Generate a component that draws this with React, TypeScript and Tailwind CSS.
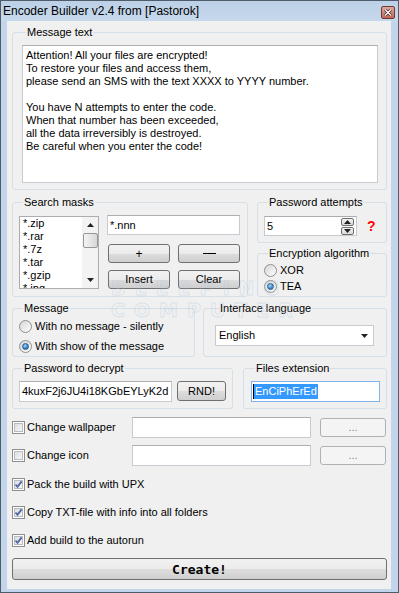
import React from "react";

type Kids = { children?: React.ReactNode; className?: string };

const Group = ({ title, className = "", children }: Kids & { title: string }) => (
  <fieldset className={`rounded-[3px] border border-[#d5dfe5] ${className}`}>
    <legend className="ml-[4px] px-[1px] leading-[13px]">{title}</legend>
    {children}
  </fieldset>
);

const Btn = ({ children, className = "", disabled }: Kids & { disabled?: boolean }) => (
  <button
    type="button"
    className={`flex items-center justify-center rounded-[3px] border leading-none ${
      disabled
        ? "border-[#adb2b5] bg-[#f4f4f4] text-[#838383]"
        : "border-[#707070] bg-[linear-gradient(#f2f2f2_0%,#ebebeb_50%,#dddddd_51%,#cfcfcf_100%)]"
    } ${className}`}
  >
    {children}
  </button>
);

const Check = ({ checked }: { checked?: boolean }) => (
  <span className="flex h-[13px] w-[13px] shrink-0 items-center justify-center border border-[#8e8f8f] bg-white">
    <span className="relative h-[9px] w-[9px] border border-[#b9bcc0] bg-[linear-gradient(135deg,#dcdfe2,#f6f6f6)]">
      {checked && (
        <svg className="absolute left-[-1px] top-[-1px]" width="9" height="9" viewBox="0 0 9 9">
          <path d="M1.5 4.5 L3.5 6.8 L7.6 1.4" fill="none" stroke="#5468a3" strokeWidth="1.9" />
        </svg>
      )}
    </span>
  </span>
);

const Radio = ({ checked }: { checked?: boolean }) => (
  <span className="flex h-[13px] w-[13px] shrink-0 items-center justify-center rounded-full border border-[#8e8f8f] bg-[linear-gradient(135deg,#d6d6d6,#fdfdfd)]">
    {checked && (
      <span className="h-[7px] w-[7px] rounded-full border border-[#2a5c8a] bg-[radial-gradient(circle_at_40%_35%,#a8dcfb,#2f7fc4_60%,#1b4f80)]" />
    )}
  </span>
);

const Arrow = ({ up, className = "" }: { up?: boolean; className?: string }) => (
  <svg className={className} width="7" height="4" viewBox="0 0 7 4">
    <path d={up ? "M0 4 L3.5 0 L7 4 Z" : "M0 0 L7 0 L3.5 4 Z"} fill="#222" />
  </svg>
);

const masks = ["*.zip", "*.rar", "*.7z", "*.tar", "*.gzip", "*.jpg"];

const message = `Attention! All your files are encrypted!
To restore your files and access them,
please send an SMS with the text XXXX to YYYY number.

You have N attempts to enter the code.
When that number has been exceeded,
all the data irreversibly is destroyed.
Be careful when you enter the code!`;

export default function App() {
  return (
    <div className="relative h-[593px] w-[399px] overflow-hidden border border-[#4f5c6a] bg-[#c2d5ea] font-['Liberation_Sans',Arial,sans-serif] text-[11px] text-black">
      {/* title bar */}
      <div className="flex h-[20px] items-center justify-between bg-[linear-gradient(#bcd0e7,#c6d8ec)] pl-[2px] pr-[3px]">
        <span className="text-[12px] leading-none">Encoder Builder v2.4 from [Pastorok]</span>
        <span className="mt-[3px] flex h-[13px] w-[14px] items-center justify-center rounded-[2px] border border-[#6e3a33] bg-[linear-gradient(#dfa79d,#c0665a)]">
          <svg width="8" height="7" viewBox="0 0 8 7">
            <path d="M1 0.5 L7 6.5 M7 0.5 L1 6.5" stroke="#3a1f1b" strokeWidth="2.6" />
            <path d="M1 0.5 L7 6.5 M7 0.5 L1 6.5" stroke="#fff" strokeWidth="1.4" />
          </svg>
        </span>
      </div>

      {/* client */}
      <div className="ml-[6px] flex h-[568px] w-[384px] flex-col bg-[#f0f0f0] pl-[5px] pr-[4px] pt-[5px]">
        <Group title="Message text" className="h-[164px] pb-[6px] pl-[9px] pr-[8px]">
          <div className="mt-[6px] h-[138px] whitespace-pre-line border border-[#c6cbd2] border-t-[#abadb3] bg-white pl-[3px] pt-[3px] leading-[13px]">
            {message}
          </div>
        </Group>

        <div className="mt-[6px] flex h-[101px] gap-[9px]">
          <Group title="Search masks" className="h-[101px] w-[236px] pl-[6px]">
            <div className="mt-[6px] flex gap-[8px]">
              <div className="mt-[1px] flex h-[73px] w-[80px] overflow-hidden border border-[#abadb3] bg-white">
                <div className="flex-1 pl-[3px] leading-[13px]">
                  {masks.map((m) => (
                    <div key={m}>{m}</div>
                  ))}
                </div>
                <div className="flex w-[16px] flex-col items-center bg-[#f3f3f3]">
                  <Arrow up className="mt-[6px]" />
                  <div className="mt-[6px] h-[15px] w-[15px] rounded-[2px] border border-[#979797] bg-[linear-gradient(90deg,#f3f3f3,#e6e6e6_50%,#d6d6d6)]" />
                  <Arrow className="mt-auto mb-[6px]" />
                </div>
              </div>
              <div className="flex w-[133px] flex-col">
                <div className="flex h-[20px] items-center border border-[#c6cbd2] border-t-[#abadb3] bg-white pl-[2px]">
                  *.nnn
                </div>
                <div className="mt-[9px] flex gap-[8px] pl-[1px]">
                  <Btn className="h-[19px] w-[62px] text-[12px]">+</Btn>
                  <Btn className="h-[19px] w-[62px]">
                    <span className="h-[1px] w-[13px] bg-black" />
                  </Btn>
                </div>
                <div className="mt-[7px] flex gap-[8px] pl-[1px]">
                  <Btn className="h-[19px] w-[62px]">Insert</Btn>
                  <Btn className="h-[19px] w-[62px]">Clear</Btn>
                </div>
              </div>
            </div>
          </Group>

          <div className="flex w-[130px] flex-col">
            <Group title="Password attempts" className="h-[47px] pl-[6px]">
              <div className="mt-[7px] flex items-center">
                <div className="flex h-[20px] w-[93px] items-center justify-between border border-[#c6cbd2] border-t-[#abadb3] bg-white pl-[2px] pr-[2px]">
                  <span>5</span>
                  <div className="flex flex-col gap-[1px]">
                    <div className="flex h-[8px] w-[13px] items-center justify-center rounded-[2px] border border-[#6f6f6f] bg-[linear-gradient(#f4f4f4,#d8d8d8)]">
                      <Arrow up />
                    </div>
                    <div className="flex h-[8px] w-[13px] items-center justify-center rounded-[2px] border border-[#6f6f6f] bg-[linear-gradient(#f4f4f4,#d8d8d8)]">
                      <Arrow />
                    </div>
                  </div>
                </div>
                <span className="ml-[10px] text-[14px] font-bold leading-none text-[#ff0000]">?</span>
              </div>
            </Group>
            <Group title="Encryption algorithm" className="mt-[4px] h-[50px] pl-[6px]">
              <div className="mt-[2px] flex h-[16px] items-center gap-[3px]">
                <Radio />
                <span>XOR</span>
              </div>
              <div className="flex h-[16px] items-center gap-[3px]">
                <Radio checked />
                <span>TEA</span>
              </div>
            </Group>
          </div>
        </div>

        <div className="mt-[5px] flex h-[55px] gap-[8px]">
          <Group title="Message" className="h-[55px] w-[183px] pl-[6px]">
            <div className="mt-[3px] flex h-[16px] items-center gap-[3px]">
              <Radio />
              <span>With no message - silently</span>
            </div>
            <div className="mt-[4px] flex h-[16px] items-center gap-[3px]">
              <Radio checked />
              <span>With show of the message</span>
            </div>
          </Group>
          <Group title="Interface language" className="h-[55px] w-[184px] pl-[11px]">
            <div className="mt-[10px] flex h-[21px] w-[159px] items-center justify-between border border-[#c6cbd2] bg-white pl-[3px] pr-[5px]">
              <span>English</span>
              <Arrow />
            </div>
          </Group>
        </div>

        <div className="mt-[5px] flex h-[47px] gap-[10px]">
          <Group title="Password to decrypt" className="h-[47px] w-[221px] pl-[6px]">
            <div className="mt-[6px] flex items-start gap-[5px]">
              <div className="flex h-[21px] w-[153px] items-center border border-[#c6cbd2] border-t-[#abadb3] bg-white pl-[2px]">
                4kuxF2j6JU4i18KGbEYLyK2d
              </div>
              <Btn className="h-[20px] w-[49px]">RND!</Btn>
            </div>
          </Group>
          <Group title="Files extension" className="h-[47px] w-[144px] pl-[7px]">
            <div className="mt-[6px] flex h-[21px] w-[129px] items-center border border-[#7eb4ea] bg-white pl-[1px]">
              <span className="h-[15px] w-[1px] bg-black" />
              <span className="bg-[#3399ff] px-[1px] leading-[15px] text-white">EnCiPhErEd</span>
            </div>
          </Group>
        </div>

        <div className="mt-[8px] flex h-[21px] items-center">
          <div className="flex w-[120px] items-center gap-[2px]">
            <Check />
            <span>Change wallpaper</span>
          </div>
          <div className="h-[21px] w-[179px] border border-[#c6cbd2] border-t-[#abadb3] bg-white" />
          <Btn disabled className="ml-[9px] h-[19px] w-[66px]">...</Btn>
        </div>
        <div className="mt-[7px] flex h-[21px] items-center">
          <div className="flex w-[120px] items-center gap-[2px]">
            <Check />
            <span>Change icon</span>
          </div>
          <div className="h-[21px] w-[179px] border border-[#c6cbd2] border-t-[#abadb3] bg-white" />
          <Btn disabled className="ml-[9px] h-[19px] w-[66px]">...</Btn>
        </div>

        <div className="mt-[10px] flex h-[16px] items-center gap-[2px]">
          <Check checked />
          <span>Pack the build with UPX</span>
        </div>
        <div className="mt-[12px] flex h-[16px] items-center gap-[2px]">
          <Check checked />
          <span>Copy TXT-file with info into all folders</span>
        </div>
        <div className="mt-[12px] flex h-[16px] items-center gap-[2px]">
          <Check checked />
          <span>Add build to the autorun</span>
        </div>

        <Btn className="mt-[10px] h-[22px] w-[375px] font-['DejaVu_Sans_Mono',monospace] text-[13px] font-bold">
          Create!
        </Btn>
      </div>

      {/* watermark */}
      <div className="pointer-events-none absolute left-[110px] top-[276px] flex flex-col font-['DejaVu_Sans',sans-serif] text-[19px] font-bold leading-[22px] tracking-[9px] text-transparent [-webkit-text-stroke:1px_rgba(170,196,220,0.32)]">
        <span>BLEEPING</span>
        <span>COMPUTER</span>
      </div>
    </div>
  );
}
